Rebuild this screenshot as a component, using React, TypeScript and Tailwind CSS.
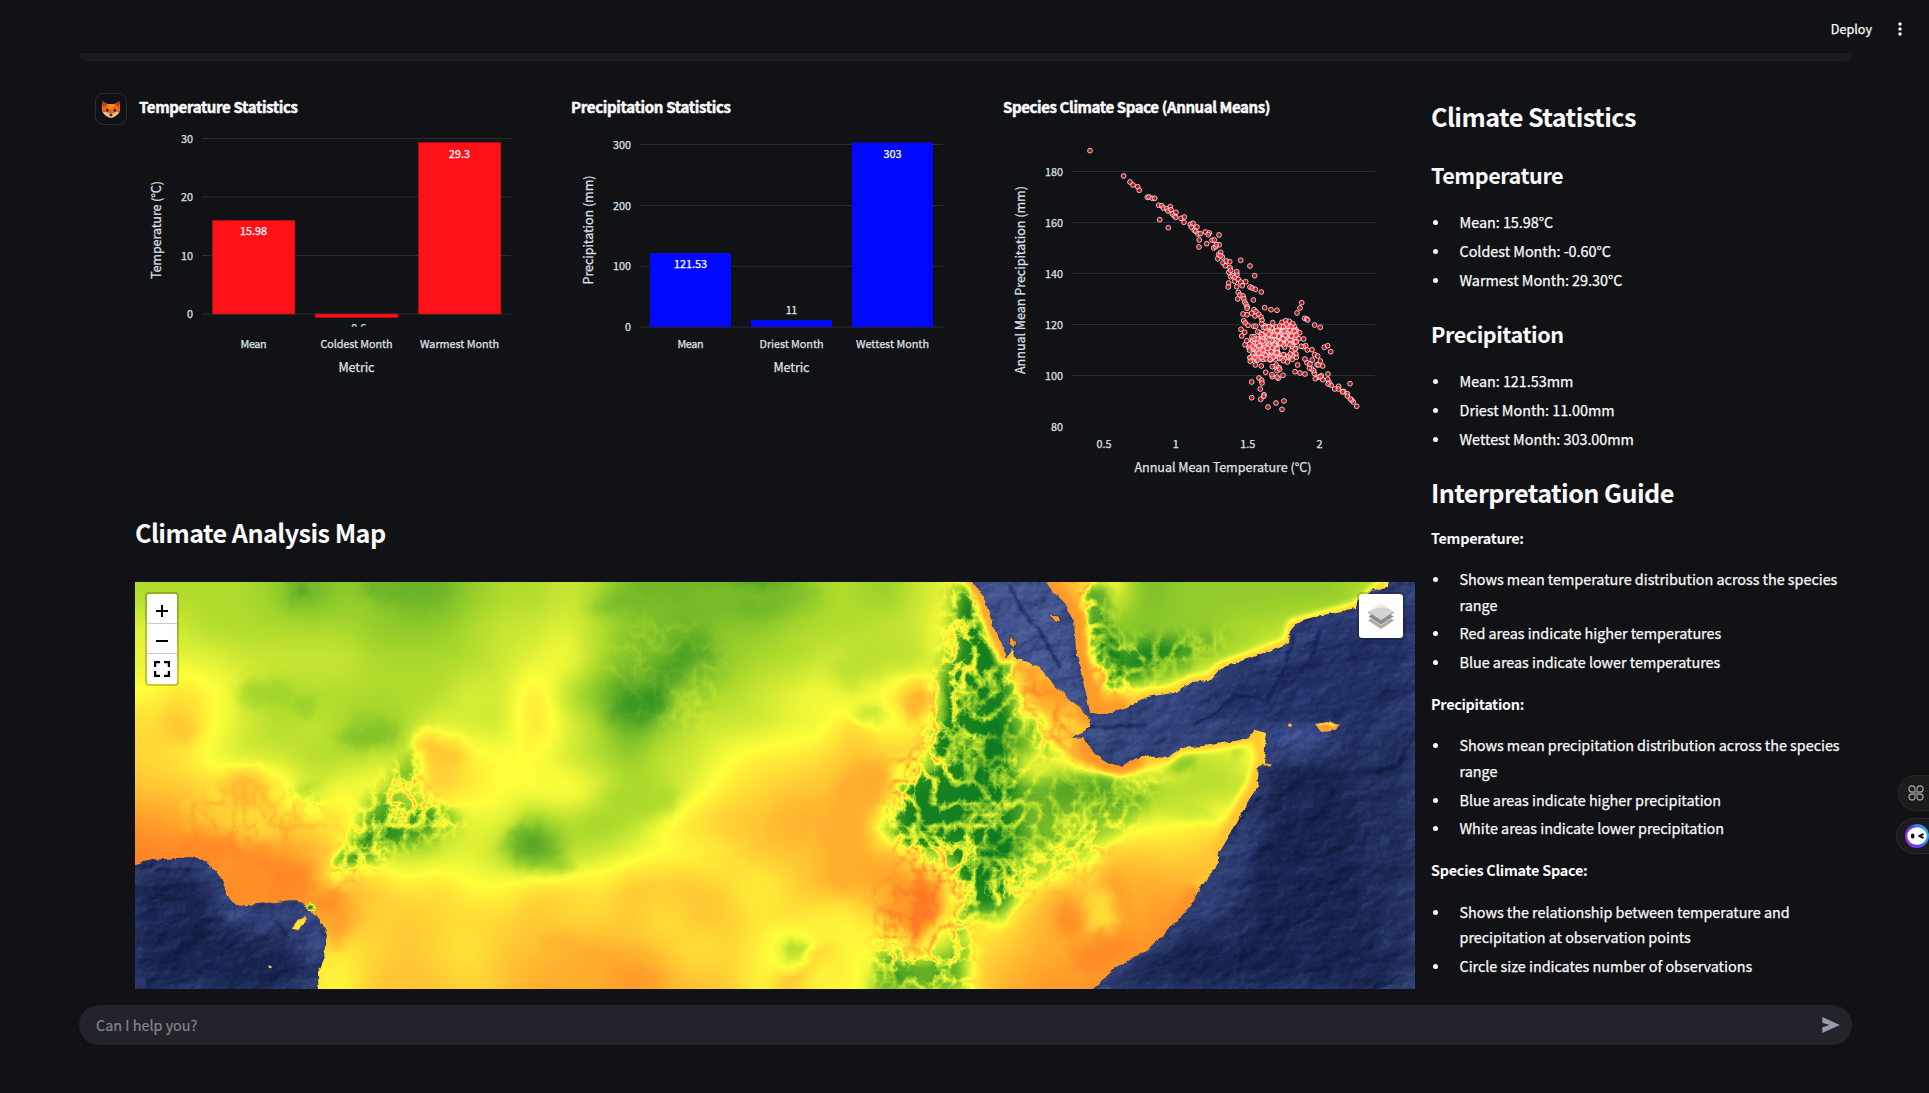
import React from "react";

const AXIS = "#dfe1e8";

type LabelProps = {
  x: number;
  y: number;
  w: number;
  size?: number;
  anchor?: "start" | "middle" | "end";
  fill?: string;
  bold?: boolean;
  rotate?: boolean;
  children: string;
};

function Label({ x, y, w, size = 10.8, anchor = "middle", fill = AXIS, bold, rotate, children }: LabelProps) {
  return (
    <text
      x={x}
      y={y}
      fontSize={size}
      textAnchor={anchor}
      fill={fill}
      stroke={fill}
      strokeWidth={bold ? 0.45 : 0.25}
      fontWeight={bold ? 700 : 400}
      textLength={w}
      transform={rotate ? `rotate(-90 ${x} ${y})` : undefined}
    >
      {children}
    </text>
  );
}

function GridLine({ x1, x2, y }: { x1: number; x2: number; y: number }) {
  return <line x1={x1} x2={x2} y1={y} y2={y} stroke="#2a2b33" strokeWidth={1} />;
}

function TemperatureChart() {
  return (
    <svg viewBox="135 93 416 389" className="h-[389px] w-[416px]">
      <Label x={139} y={113.3} w={159} size={15} anchor="start" fill="#fafafa" bold>Temperature Statistics</Label>
      {[138.5, 197, 255.5, 314].map((y) => <GridLine key={y} x1={202} x2={511} y={y} />)}
      <Label x={193} y={142.5} w={12} anchor="end">30</Label>
      <Label x={193} y={200.7} w={12} anchor="end">20</Label>
      <Label x={193} y={259.5} w={12} anchor="end">10</Label>
      <Label x={193} y={317.5} w={6} anchor="end">0</Label>
      <g fill="#ff1118" stroke="#a61119" strokeWidth={0.7}>
        <rect x={212.5} y={220.5} width={82.4} height={93.5} />
        <rect x={315.3} y={314} width={82.4} height={3.5} />
        <rect x={418.5} y={142.6} width={82.4} height={171.4} />
      </g>
      <Label x={253.6} y={234.8} w={27} fill="#fff">15.98</Label>
      <Label x={459.6} y={158} w={21} fill="#fff">29.3</Label>
      <clipPath id="plot-floor"><rect x={202} y={120} width={310} height={206.8} /></clipPath>
      <g clipPath="url(#plot-floor)"><Label x={356.8} y={332.2} w={19}>-0.6</Label></g>
      <Label x={253.6} y={347.7} w={26}>Mean</Label>
      <Label x={356.5} y={347.7} w={72}>Coldest Month</Label>
      <Label x={459.6} y={347.7} w={79}>Warmest Month</Label>
      <Label x={356.5} y={371.7} w={36} size={12.6}>Metric</Label>
      <Label x={160.6} y={230} w={98} size={12.6} rotate>Temperature (°C)</Label>
    </svg>
  );
}

function PrecipitationChart() {
  return (
    <svg viewBox="567 93 416 389" className="h-[389px] w-[416px]">
      <Label x={571} y={113.3} w={160} size={15} anchor="start" fill="#fafafa" bold>Precipitation Statistics</Label>
      {[144.5, 205.5, 266.3, 327].map((y) => <GridLine key={y} x1={640} x2={943} y={y} />)}
      <Label x={631} y={148.7} w={18} anchor="end">300</Label>
      <Label x={631} y={209.7} w={18} anchor="end">200</Label>
      <Label x={631} y={269.7} w={18} anchor="end">100</Label>
      <Label x={631} y={330.7} w={6} anchor="end">0</Label>
      <g fill="#0008ff">
        <rect x={650} y={253} width={81} height={74} />
        <rect x={751} y={320} width={81} height={7} />
        <rect x={852} y={142.5} width={81} height={184.5} />
      </g>
      <Label x={690.5} y={267.8} w={33} fill="#fff">121.53</Label>
      <Label x={791.5} y={314} w={11.5}>11</Label>
      <Label x={892.5} y={158} w={18} fill="#fff">303</Label>
      <Label x={690.5} y={347.7} w={26}>Mean</Label>
      <Label x={791.5} y={347.7} w={64}>Driest Month</Label>
      <Label x={892.5} y={347.7} w={73}>Wettest Month</Label>
      <Label x={791.5} y={371.7} w={36} size={12.6}>Metric</Label>
      <Label x={592.8} y={230} w={109} size={12.6} rotate>Precipitation (mm)</Label>
    </svg>
  );
}

/* Observation points, stored in thirds of a pixel from the plot's corner. */
const POINTS: [number, number][] = [
  [300, 212], [401, 288], [420, 306], [429, 315], [443, 320], [448, 331], [472, 352], [477, 351], [487, 355], [494, 355],
  [506, 376], [515, 377], [520, 384], [530, 386], [534, 393], [541, 380], [543, 389], [547, 402], [553, 407], [558, 397],
  [557, 412], [509, 419], [535, 443], [573, 415], [583, 411], [582, 427], [601, 433], [604, 441], [609, 430], [613, 451],
  [621, 441], [617, 454], [624, 462], [631, 461], [628, 480], [627, 501], [646, 456], [658, 459], [655, 464], [666, 481],
  [673, 480], [650, 491], [687, 465], [671, 504], [677, 500], [688, 494], [679, 494], [686, 523], [692, 517], [683, 536],
  [697, 531], [691, 527], [699, 549], [706, 557], [709, 543], [719, 545], [720, 563], [716, 577], [722, 571], [722, 590],
  [728, 587], [734, 592], [741, 583], [740, 575], [716, 609], [715, 621], [734, 604], [745, 598], [752, 606], [757, 617],
  [740, 620], [767, 605], [752, 541], [780, 558], [794, 587], [780, 621], [787, 624], [796, 628], [814, 636], [745, 637],
  [750, 645], [759, 648], [761, 656], [743, 657], [764, 666], [768, 673], [772, 680], [771, 685], [790, 660], [792, 689],
  [798, 695], [785, 700], [771, 704], [759, 702], [795, 708], [806, 703], [813, 711], [816, 721], [815, 731], [761, 722],
  [766, 729], [774, 736], [791, 739], [797, 739], [753, 748], [764, 757], [755, 768], [824, 683], [843, 689], [861, 691],
  [935, 668], [930, 684], [921, 699], [944, 715], [950, 717], [953, 720], [974, 735], [991, 742], [1003, 802], [1013, 797],
  [1022, 815], [1100, 979], [1090, 966], [1085, 960], [1081, 957], [1072, 941], [1072, 948], [1061, 934], [1058, 936],
  [1046, 919], [1045, 927], [1034, 927], [1080, 911], [1023, 915], [1017, 907], [1014, 912], [1013, 898], [1014, 882],
  [998, 899], [994, 887], [984, 892], [976, 896], [991, 890], [973, 880], [971, 872], [965, 867], [981, 854], [998, 858],
  [991, 843], [958, 864], [951, 848], [960, 852], [945, 837], [967, 840], [974, 824], [983, 828], [966, 809], [952, 810],
  [947, 797], [940, 800], [934, 799], [941, 777], [929, 758], [915, 875], [930, 879], [945, 882], [923, 855], [879, 886],
  [865, 895], [861, 891], [847, 890], [846, 884], [827, 877], [861, 872], [856, 860], [847, 860], [859, 855], [867, 863],
  [869, 868], [785, 906], [807, 894], [815, 901], [816, 909], [811, 927], [785, 953], [812, 958], [822, 944], [821, 949],
  [834, 981], [858, 969], [882, 963], [876, 988], [887, 722], [898, 724], [908, 731], [876, 727], [889, 733], [848, 728],
  [837, 740], [826, 742], [861, 752], [869, 738], [880, 740], [904, 740], [913, 753], [919, 766], [926, 776], [905, 768],
  [796, 855], [814, 858], [804, 840], [781, 844], [778, 810], [765, 794], [770, 782], [779, 792], [786, 770], [803, 755],
  [815, 764], [919, 786], [915, 807], [919, 832], [907, 838], [892, 846], [880, 842], [901, 822], [840, 838], [985, 855],
];

function cluster(): [number, number][] {
  const out: [number, number][] = [];
  let seed = 41;
  const rand = () => {
    seed = (seed * 16807) % 2147483647;
    return seed / 2147483647;
  };
  while (out.length < 225) {
    const x = 776 + rand() * 145;
    const y = 735 + rand() * 108;
    const top = x < 820 ? 782 - (x - 776) * 0.8 : 738;
    const bottom = x > 870 ? 850 - (x - 870) * 0.55 : 840;
    const sparse = x > 868 && y > 800 && rand() < 0.4;
    if (y > top && y < bottom && !sparse) out.push([x, y]);
  }
  return out;
}

const ALL_POINTS = [...cluster(), ...POINTS];

function ScatterChart() {
  return (
    <svg viewBox="999 93 416 389" className="h-[389px] w-[416px]">
      <Label x={1003} y={113.3} w={267.5} size={15} anchor="start" fill="#fafafa" bold>Species Climate Space (Annual Means)</Label>
      {[171.5, 222.5, 273.5, 324.5, 375.5].map((y) => <GridLine key={y} x1={1072} x2={1375} y={y} />)}
      {[180, 160, 140, 120, 100].map((v, i) => (
        <Label key={v} x={1063} y={175.7 + i * 51} w={18} anchor="end">{String(v)}</Label>
      ))}
      <Label x={1063} y={430.7} w={12} anchor="end">80</Label>
      <Label x={1104} y={447.7} w={15}>0.5</Label>
      <Label x={1175.8} y={447.7} w={6}>1</Label>
      <Label x={1247.8} y={447.7} w={15}>1.5</Label>
      <Label x={1319.6} y={447.7} w={6}>2</Label>
      <g fill="#ff1118" fillOpacity={0.66} stroke="#fff" strokeWidth={0.9} strokeOpacity={0.82}>
        {ALL_POINTS.map(([px, py], i) => (
          <circle key={i} cx={(990 + px / 3).toFixed(1)} cy={(80 + py / 3).toFixed(1)} r={2.4} />
        ))}
      </g>
      <Label x={1223} y={471.7} w={177} size={12.6}>Annual Mean Temperature (°C)</Label>
      <Label x={1024.8} y={280} w={188} size={12.6} rotate>Annual Mean Precipitation (mm)</Label>
    </svg>
  );
}

/* Temperature raster, one hex digit per 32px cell: 0 is coolest, f is hottest. */
const RASTER = [
  "55554344334556533332355467bccc8344444457",
  "765555544456675443445556695ccc2444556688",
  "7776666555567854334556755963ccd135688888",
  "8a8755555576a53245567869b62addd9abbbbbbb",
  "ab8656545766a752466677b78a438ccca8bbbbbb",
  "a97665566b98865466899abbcb427acca578bbbb",
  "bbaca688ab988975579abbcc533534344557bbbb",
  "dccabb96857745458abbccb443665667899bbbbb",
  "eedcdca656752567889bbbccc86348bbabbccccc",
  "eeeedcbb9a88aa9bbba8accddb57cbcccccccddd",
  "dddddddabaaabaab9bb9a88dec8acc9ddddddddd",
  "ddddd99aba9bbccbb9a95a88b8abccdddddddddd",
  "ddddd98bbbabcccdcbb8b89375bcdddddddddddd",
];

const gray = (v: number) => `rgb(${Math.round(v * 17)},${Math.round(v * 17)},${Math.round(v * 17)})`;

/* Local warm and cool spots: x, y, rx, ry, value, rotation. */
const SPOTS: [number, number, number, number, number, number][] = [
  [168, 8, 14, 12, 3, 0], [164, 10, 6, 5, 0.5, 0], [268, 2, 46, 18, 2.8, 0], [170, 125, 12, 8, 3.8, 0], [130, 112, 26, 16, 4.4, 0],
  [236, 153, 34, 14, 3.4, -5], [45, 145, 14, 13, 11, 0], [300, 170, 30, 16, 11, 10], [108, 205, 22, 16, 11.6, 0],
  [398, 264, 26, 22, 3, 0], [396, 261, 14, 10, 2, 0], [424, 283, 14, 9, 3.6, 20], [268, 256, 36, 7, 4, 0], [212, 275, 22, 6, 3, -38],
  [240, 255, 24, 6, 3, -30], [285, 240, 24, 4, 4, -12], [238, 225, 8, 10, 4.5, 0], [275, 176, 5, 12, 3.5, 25],
  [172, 208, 14, 6, 4, 0], [503, 122, 30, 17, 1.9, -25], [520, 118, 5, 10, 0, 0], [540, 85, 34, 13, 2.2, -50],
  [571, 69, 5, 4, 1, 0], [480, 20, 24, 8, 3, -15], [620, 14, 70, 9, 3.4, 0], [505, 220, 40, 16, 4.8, 0],
  [725, 80, 30, 20, 5.4, -30], [735, 132, 18, 9, 5, 0], [784, 120, 18, 20, 12, 0], [735, 205, 24, 26, 12.2, 0], [712, 250, 24, 60, 12, 10],
  [664, 372, 12, 12, 4, -30], [668, 385, 34, 4, 13, -38], [785, 325, 12, 34, 15, 4], [765, 318, 14, 24, 13.6, 0], [805, 310, 6, 24, 14, 12],
  [832, 20, 6, 22, 2.6, -10], [840, 42, 7, 20, 2.4, -25], [853, 72, 10, 18, 3, -20], [838, 120, 9, 6, 0.6, -40],
  [866, 110, 8, 40, 2, -5], [860, 165, 12, 26, 1.2, 0], [818, 155, 24, 14, 3.2, -30], [830, 178, 26, 12, 2.4, 10],
  [850, 205, 26, 12, 2.8, 10], [800, 230, 28, 22, 4.2, 0], [840, 225, 22, 14, 3.6, -40], [864, 262, 22, 18, 1.4, -20],
  [848, 290, 12, 16, 2.2, 0], [873, 264, 7, 4, 0, 0], [850, 325, 24, 14, 4.4, 20], [790, 255, 16, 7, 3.4, 0],
  [752, 396, 6, 7, 0, 0], [770, 400, 14, 8, 3.4, 0], [800, 398, 8, 12, 3.6, 0], [890, 88, 16, 14, 13.2, 30], [905, 115, 24, 14, 13.4, 45], [925, 150, 20, 16, 12.6, 40],
  [955, 177, 12, 20, 13.4, -45], [975, 72, 16, 28, 1.4, -15], [984, 95, 14, 12, 1, 0], [1004, 86, 34, 9, 3, -15], [967, 22, 10, 26, 2.4, -10],
  [1045, 82, 40, 7, 3.8, -18], [1098, 60, 36, 6, 4.6, -18], [1099, 168, 9, 7, 3.4, 20], [1048, 178, 20, 10, 3, -15], [950, 202, 34, 11, 2.8, -8], [990, 214, 24, 10, 4, 20],
  [895, 225, 30, 7, 4.6, -25], [895, 185, 26, 14, 7.4, 0], [915, 275, 22, 10, 8.4, 0],
  [934, 338, 12, 18, 13.8, 0], [968, 330, 13, 22, 9.4, 0], [990, 330, 10, 44, 13, -20], [968, 372, 34, 20, 13.8, -20], [1048, 225, 40, 10, 5.6, 15],
  [826, 342, 5, 8, 4, 30], [829, 368, 8, 4, 4, -35], [484, 372, 40, 6, 12.4, 0], [500, 395, 30, 8, 13, 10], [425, 358, 16, 6, 12.2, 0],
  [150, 300, 28, 22, 14, 0], [90, 268, 50, 12, 14, 10], [192, 320, 18, 8, 14, -10], [204, 345, 8, 20, 13, 15], [116, 300, 20, 18, 13.4, 0],
];

const SW_SEA =
  "M-10 284L0 282 18 278 55 275 68 278 80 288 87 298 92 313 103 324 122 322 142 320 157 318 168 322 170 327 183 334 192 352 190 364 189 377 183 391 184 420 -10 420Z";
const EAST_SEA =
  "M836 -8L837 0 848 13 854 31 859 48 868 65 871 77 877 66 879 75 904 85 918 101 932 116 945 125 954 138 954 146 946 151 936 157 948 156 959 170 971 181 986 184 1007 174 1032 176 1046 166 1068 164 1100 159 1114 155 1120 148 1132 151 1130 165 1129 181 1124 185 1122 205 1112 221 1102 241 1084 271 1082 283 1064 308 1055 325 1036 345 1014 366 982 385 957 407 950 420 1290 420 1290 -8 1253 -8 1252 5 1236 9 1223 18 1221 26 1196 31 1161 41 1155 48 1154 61 1118 75 1086 86 1075 98 1057 100 1039 111 1011 115 993 126 971 132 955 131 951 111 946 91 941 68 939 38 930 21 918 10 911 0 908 -8Z";

function TemperatureRaster() {
  return (
    <svg viewBox="0 0 1280 407" className="block h-[407px] w-[1280px]" aria-label="Climate map">
      <defs>
        <filter id="soften" x="0" y="0" width="1280" height="407" filterUnits="userSpaceOnUse" colorInterpolationFilters="sRGB">
          <feGaussianBlur stdDeviation="15" />
        </filter>
        <filter id="spots" x="-20" y="-20" width="1320" height="447" filterUnits="userSpaceOnUse" colorInterpolationFilters="sRGB">
          <feGaussianBlur stdDeviation="7" result="b" />
          <feTurbulence type="fractalNoise" baseFrequency="0.05" numOctaves="5" seed="8" result="n" />
          <feDisplacementMap in="b" in2="n" scale="15" xChannelSelector="R" yChannelSelector="G" />
        </filter>
        <filter id="ramp" x="0" y="0" width="1280" height="407" filterUnits="userSpaceOnUse" colorInterpolationFilters="sRGB">
          <feComponentTransfer>
            <feFuncR type="table" tableValues="0.02 0.12 0.29 0.45 0.57 0.69 0.8 0.91 1 1 1 1 1 1 1 1" />
            <feFuncG type="table" tableValues="0.46 0.53 0.63 0.72 0.8 0.86 0.91 0.96 1 0.92 0.85 0.77 0.68 0.6 0.52 0.43" />
            <feFuncB type="table" tableValues="0.15 0.12 0.14 0.16 0.17 0.18 0.2 0.22 0.23 0.22 0.21 0.2 0.18 0.16 0.15 0.13" />
          </feComponentTransfer>
        </filter>
        <filter id="relief" x="0" y="0" width="1280" height="407" filterUnits="userSpaceOnUse" colorInterpolationFilters="sRGB">
          <feTurbulence type="turbulence" baseFrequency="0.05 0.045" numOctaves="5" seed="5" />
          <feColorMatrix values="-2.4 0 0 0 1.02  -2.4 0 0 0 1.02  -2.4 0 0 0 1.02  0 0 0 0 1" />
        </filter>
        <filter id="feather" x="-60" y="-60" width="1400" height="540" filterUnits="userSpaceOnUse"><feGaussianBlur stdDeviation="9" /></filter>
        <filter id="coast" x="-20" y="-20" width="1320" height="447" filterUnits="userSpaceOnUse" colorInterpolationFilters="sRGB"><feGaussianBlur stdDeviation="3" /></filter>
        <filter id="ragged" x="-20" y="-20" width="1320" height="447" filterUnits="userSpaceOnUse" colorInterpolationFilters="sRGB">
          <feTurbulence type="fractalNoise" baseFrequency="0.12" numOctaves="3" seed="3" result="n" />
          <feDisplacementMap in="SourceGraphic" in2="n" scale="5" xChannelSelector="R" yChannelSelector="G" />
        </filter>
        <filter id="seabed" x="-20" y="-20" width="1320" height="447" filterUnits="userSpaceOnUse" colorInterpolationFilters="sRGB">
          <feTurbulence type="fractalNoise" baseFrequency="0.03 0.045" numOctaves="4" seed="12" />
          <feDiffuseLighting surfaceScale="2.2" lightingColor="#ffffff"><feDistantLight azimuth="215" elevation="26" /></feDiffuseLighting>
        </filter>
        <filter id="wide" x="-60" y="-60" width="1400" height="540" filterUnits="userSpaceOnUse" colorInterpolationFilters="sRGB"><feGaussianBlur stdDeviation="12" /></filter>
        <filter id="crease" x="-60" y="-60" width="1400" height="540" filterUnits="userSpaceOnUse"><feGaussianBlur stdDeviation="0.8" /></filter>
        <clipPath id="sea"><path d={SW_SEA} /><path d={EAST_SEA} /></clipPath>
        <mask id="highlands" maskUnits="userSpaceOnUse" x="0" y="0" width="1280" height="407">
          <g filter="url(#feather)" fill="#d8d8d8">
            <path d="M820 0L850 10 872 80 880 160 885 240 900 300 870 330 830 330 770 290 755 240 757 190 790 160 800 110 815 60Z" />
            <path d="M740 300H835V407H745Z" fill="#a0a0a0" />
            <path d="M935 0L960 0 985 60 1100 55 1000 100 960 115 950 60Z" fill="#b0b0b0" />
            <path d="M195 290L235 225 280 170 290 215 330 240 250 270 200 310Z" fill="#b8b8b8" />
            <path d="M875 80L930 125 950 160 900 175Z" fill="#909090" />
            <path d="M880 200L1030 190 960 290 880 320Z" fill="#606060" />
            <ellipse cx="530" cy="90" rx="60" ry="60" fill="#1c1c1c" />
            <ellipse cx="120" cy="235" rx="80" ry="30" fill="#383838" />
          </g>
        </mask>
      </defs>
      <g filter="url(#ramp)">
        <rect width="1280" height="407" fill="#888" />
        <g filter="url(#soften)">
          {RASTER.map((row, r) =>
            row.split("").map((c, i) => (
              <rect
                key={`${r}-${i}`}
                x={i === 0 ? -60 : i * 32}
                y={r === 0 ? -60 : r * 32}
                width={i === 0 || i === 39 ? 93 : 33}
                height={r === 0 || r === 12 ? 93 : 33}
                fill={gray(parseInt(c, 16))}
              />
            ))
          )}
        </g>
        <g filter="url(#spots)" opacity={0.88}>
          {SPOTS.map(([x, y, rx, ry, v, a], i) => (
            <ellipse key={i} cx={x} cy={y} rx={rx} ry={ry} fill={gray(v)} transform={`rotate(${a} ${x} ${y})`} />
          ))}
        </g>
        <g mask="url(#highlands)" className="mix-blend-overlay"><rect width="1280" height="407" filter="url(#relief)" /></g>
        <g filter="url(#coast)" fill="none" strokeLinejoin="round">
          <path d="M836 -8L848 13 854 31 859 48 868 65 873 80" stroke={gray(12.2)} strokeWidth={18} />
          <path d="M908 -8L918 10 930 21 939 38 941 68 946 91 951 111 955 131 971 132 993 126" stroke={gray(12.8)} strokeWidth={22} />
          <path d="M993 126L1011 115 1039 111 1057 100 1075 98 1086 86 1118 75 1154 61 1158 43 1221 26 1252 0" stroke={gray(10.8)} strokeWidth={10} />
          <path d="M948 156L959 170 971 181 986 184 1007 174" stroke={gray(13)} strokeWidth={20} />
          <path d="M1007 174L1032 176 1046 166 1068 164 1100 159 1120 150 1129 181" stroke={gray(11)} strokeWidth={10} />
          <path d="M1129 181L1122 205 1112 221 1102 241 1084 271 1064 308" stroke={gray(11)} strokeWidth={20} />
          <path d="M1064 308L1036 345 1014 366 982 385 950 414" stroke={gray(13.2)} strokeWidth={18} />
        </g>
      </g>
      <g filter="url(#ragged)">
        <g clipPath="url(#sea)">
          <rect x="-20" y="-20" width="1320" height="447" fill="#1b2856" />
          <g filter="url(#wide)">
            <path d="M830 -20H930L960 130 1120 90 1160 30 1290 -10V60L1120 140 990 190 940 170Z" fill="#37477f" />
            <path d="M820 -20H930L960 130 940 150 860 80Z" fill="#485995" />
            <path d="M1120 70L1290 0V170L1170 160 1060 130Z" fill="#25346b" />
            <path d={SW_SEA + EAST_SEA} fill="none" stroke="#455892" strokeWidth={14} />
            <path d="M1200 160L1280 120V407H1250Z" fill="#2b3b70" opacity={0.5} />
            <ellipse cx="1165" cy="158" rx="40" ry="14" fill="#465c9e" />
            <path d="M60 290L90 300 130 335 180 335 190 400 160 360 90 345Z" fill="#3b4c87" />
            <path d="M1130 190L1090 290 1050 350 1100 350 1120 270Z" fill="#2f3f77" />
          </g>
          <g fill="none" stroke="#101a40" strokeWidth={2.2} strokeLinecap="round" opacity={0.8} filter="url(#crease)">
            <path d="M1159 55L1150 85 1132 120M954 146L1010 143M1232 250L1225 275 1205 290 1185 320 1160 345M1260 395L1252 402 1240 404M1280 150L1262 185 1230 192M1106 350L1107 370 1103 400M1125 215L1110 228 1098 250M875 5L885 25 905 50 925 85M1130 117L1100 113 1085 128 1060 142M22 287L55 288M65 338L92 339M142 340L150 352M0 286L18 284M1185 50L1176 75M17 395L10 407" />
          </g>
          <rect x="-20" y="-20" width="1320" height="447" filter="url(#seabed)" className="mix-blend-soft-light" opacity={0.75} />
        </g>
        <path d="M1180 142L1192 140 1205 143 1198 149 1186 150Z" fill="#ffa42e" />
        <path d="M1184 143L1192 142 1200 145" stroke="#ffe73a" strokeWidth={2} fill="none" />
        <circle cx="1155" cy="143" r="2" fill="#ffb02e" />
        <path d="M1128 183H1136" stroke="#ffb02e" strokeWidth={3} />
        <path d="M914 32L924 33 926 40 918 37ZM874 54L882 60 880 66 875 62ZM938 100L941 106" fill="#ff9a2c" stroke="#263d48" strokeWidth={1} />
        <path d="M163 338L170 335 168 343 163 348 157 346Z" fill="#ffe53a" stroke="#ffa32e" strokeWidth={1} />
        <circle cx="135" cy="384" r="1.6" fill="#ffd43a" />
        <circle cx="176" cy="325" r="4.6" fill="#e8f03a" />
        <circle cx="176" cy="325" r="2.6" fill="#2b8a35" />
      </g>
    </svg>
  );
}

function Fox() {
  return (
    <svg viewBox="0 0 20 20" className="size-5">
      <path d="M1.6 2.2C1 6 .8 9 .8 11.4c1.5 3.6 5.4 7 9.2 7.4 3.8-.4 7.7-3.8 9.2-7.4 0-2.4-.2-5.4-.8-9.2L13.4 5H6.6z" fill="#e8661a" />
      <path d="M1.6 2.2L5.8 5.2 2.4 8zM18.4 2.2L14.2 5.2 17.6 8z" fill="#8c4a32" />
      <path d="M6.6 5h6.8L12 9.8h-4z" fill="#f98a26" />
      <path d="M1.5 13c2.5-.2 5 .2 7.1 1.8L10 16l1.4-1.2c2.1-1.6 4.6-2 7.1-1.8-1.8 2.9-5 5.400-8.500 5.800-3.500-.4-6.700-2.900-8.500-5.800z" fill="#dfc3a4" />
      <ellipse cx="6.3" cy="11.3" rx="1.1" ry="1.5" fill="#2b1a16" />
      <ellipse cx="13.7" cy="11.3" rx="1.1" ry="1.5" fill="#2b1a16" />
      <ellipse cx="10" cy="16.2" rx="1.6" ry="1.1" fill="#3a2420" />
    </svg>
  );
}

function Bullets({ items, className }: { items: string[]; className: string }) {
  return (
    <ul className={`flex flex-col gap-[3.2px] ${className}`}>
      {items.map((t) => (
        <li key={t} className="flex text-[14.4px] leading-[25.6px]">
          <span className="ml-[2px] mt-[11px] size-[5px] shrink-0 rounded-full bg-[#fafafa]" />
          <span className="ml-[21.5px] whitespace-pre-line tracking-[-0.025px] [-webkit-text-stroke:0.25px]">{t}</span>
        </li>
      ))}
    </ul>
  );
}

export default function App() {
  return (
    <div
      className="flex h-[1093px] w-[1929px] flex-col overflow-hidden bg-[#111216] text-[#fafafa]"
      style={{ fontFamily: '"Source Sans Pro", "Noto Sans CJK SC", "Open Sans", sans-serif' }}
    >
      <header className="flex h-[53px] shrink-0 items-center justify-end pr-[22px]">
        <span className="mt-[5px] text-[12.6px] leading-5 [-webkit-text-stroke:0.25px]">Deploy</span>
        <svg viewBox="0 0 14 16" className="ml-[21px] mt-[5px] h-4 w-3.5" fill="#fafafa">
          <circle cx="7" cy="3" r="1.7" />
          <circle cx="7" cy="8" r="1.7" />
          <circle cx="7" cy="13" r="1.7" />
        </svg>
      </header>
      <div className="ml-[79px] h-2 w-[1773px] shrink-0 rounded-b-lg bg-[#1a1b20]" />

      <main className="flex h-[928px] shrink-0 pl-[95px] pt-8">
        <div className="flex size-8 shrink-0 items-center justify-center rounded-lg border border-[#2a2c34]"><Fox /></div>

        <section className="ml-2 w-[1280px] shrink-0">
          <div className="grid grid-cols-3 gap-4">
            <TemperatureChart />
            <PrecipitationChart />
            <ScatterChart />
          </div>
          <h3 className="mt-[32px] h-9 whitespace-nowrap text-[25.2px] font-bold leading-9 tracking-[-0.56px]">Climate Analysis Map</h3>
          <div className="relative mt-[32px] h-[407px]">
            <TemperatureRaster />
            <div className="absolute left-[10px] top-[10px] flex w-[34px] flex-col rounded border-2 border-black/20 bg-white bg-clip-padding text-black">
              <span className="flex h-[30px] items-center justify-center border-b border-[#ccc]">
                <svg viewBox="0 0 14 14" className="mt-1 size-3.5" stroke="#000" strokeWidth="2"><path d="M1 7H13M7 1V13" /></svg>
              </span>
              <span className="flex h-[30px] items-center justify-center border-b border-[#ccc]">
                <svg viewBox="0 0 14 14" className="mt-1 size-3.5" stroke="#000" strokeWidth="2"><path d="M1 7H13" /></svg>
              </span>
              <span className="flex h-[30px] items-center justify-center">
                <svg viewBox="0 0 16 16" className="size-4" fill="none" stroke="#000" strokeWidth="2.2"><path d="M1.1 6V1.1H6M10 1.1H14.9V6M14.9 10V14.9H10M6 14.9H1.1V10" /></svg>
              </span>
            </div>
            <div className="absolute right-[10px] top-[10px] flex size-12 items-center justify-center rounded-[5px] border-2 border-black/20 bg-white bg-clip-padding">
              <svg viewBox="0 0 26 26" className="size-[26px]">
                <path d="M0 17.5L13 26 26 17.5 22 15 13 20.5 4 15z" fill="#a9a9a9" />
                <path d="M0 13.5L13 22 26 13.5 22 11 13 16.5 4 11z" fill="#8c8c8c" stroke="#fff" strokeWidth=".6" />
                <path d="M0 8.7L13 17.2 26 8.7 13 .2z" fill="#d2d2d2" stroke="#fff" strokeWidth=".5" />
                <path d="M0 9L13 .4 26 9 20 5.5 13 4.5 6 6z" fill="#ebebeb" />
                <path d="M0 9L13 17.5 26 9" fill="none" stroke="#8c8c8c" strokeWidth="1" />
              </svg>
            </div>
          </div>
        </section>

        <aside className="ml-4 w-[421px] shrink-0">
          <h3 className="mt-[5px] h-9 text-[25.2px] font-bold leading-9 tracking-[-0.55px]">Climate Statistics</h3>
          <h4 className="mt-[25px] h-8 text-[21.6px] font-bold leading-8 tracking-[-0.45px]">Temperature</h4>
          <Bullets className="mt-[18px]" items={["Mean: 15.98°C", "Coldest Month: -0.60°C", "Warmest Month: 29.30°C"]} />
          <h4 className="mt-[25.8px] h-8 text-[21.6px] font-bold leading-8 tracking-[-0.45px]">Precipitation</h4>
          <Bullets className="mt-[18px]" items={["Mean: 121.53mm", "Driest Month: 11.00mm", "Wettest Month: 303.00mm"]} />
          <h3 className="mt-[22.8px] h-9 text-[25.2px] font-bold leading-9 tracking-[-0.58px]">Interpretation Guide</h3>
          <p className="mt-[14.6px] text-[14.4px] font-bold leading-[25.6px] tracking-[-0.28px]">Temperature:</p>
          <Bullets
            className="mt-4"
            items={["Shows mean temperature distribution across the species\nrange", "Red areas indicate higher temperatures", "Blue areas indicate lower temperatures"]}
          />
          <p className="mt-[15.8px] text-[14.4px] font-bold leading-[25.6px] tracking-[-0.28px]">Precipitation:</p>
          <Bullets
            className="mt-4"
            items={["Shows mean precipitation distribution across the species\nrange", "Blue areas indicate higher precipitation", "White areas indicate lower precipitation"]}
          />
          <p className="mt-[16px] text-[14.4px] font-bold leading-[25.6px] tracking-[-0.25px]">Species Climate Space:</p>
          <Bullets
            className="mt-4"
            items={["Shows the relationship between temperature and\nprecipitation at observation points", "Circle size indicates number of observations"]}
          />
        </aside>
      </main>

      <div className="ml-[79px] mt-4 flex h-10 w-[1773px] shrink-0 items-center justify-between rounded-full bg-[#22232b] pl-[17px] pr-3">
        <span className="mb-px text-[14.4px] text-[#85868c] [-webkit-text-stroke:0.2px]">Can I help you?</span>
        <svg viewBox="0 0 18 16" className="h-4 w-[18px]" fill="#989bae"><path d="M.3 0L18 8 .3 16V10.3L7.5 8 .3 5.7Z" /></svg>
      </div>

      <div className="absolute left-[1898px] top-[775px] flex h-9 w-[31px] items-center justify-start rounded-l-full border border-r-0 border-[#2a2a2a] bg-[#1c1c1c] pl-[9px]">
        <svg viewBox="0 0 16 16" className="size-4 shrink-0" fill="none" stroke="#9a9a9a" strokeWidth="1.3">
          <path d="M7 7H3.8A3 3 0 1 1 7 3.8ZM9 7V3.8A3 3 0 1 1 12.2 7ZM7 9V12.2A3 3 0 1 1 3.8 9ZM9 9H12.2A3 3 0 1 1 9 12.2Z" />
        </svg>
      </div>
      <div className="absolute left-[1896px] top-[818px] flex h-9 w-[33px] items-center overflow-hidden rounded-l-full border border-r-0 border-[#2a2a2a] bg-[#1c1c1c] pl-2">
        <svg viewBox="0 0 24 24" className="size-6 shrink-0">
          <defs>
            <linearGradient id="face" x1="0" y1="1" x2="1" y2="0.6">
              <stop offset="0" stopColor="#b32ee8" />
              <stop offset=".5" stopColor="#5b3df0" />
              <stop offset="1" stopColor="#22a7e8" />
            </linearGradient>
          </defs>
          <circle cx="12" cy="12" r="12" fill="url(#face)" />
          <ellipse cx="12" cy="12" rx="9.8" ry="8.8" fill="#fff" />
          <rect x="6" y="9.5" width="3.4" height="5" rx="1.5" fill="#151515" />
          <path d="M18.5 9.8L14.5 12 18.5 14.2" fill="none" stroke="#151515" strokeWidth="2" />
        </svg>
      </div>
    </div>
  );
}
